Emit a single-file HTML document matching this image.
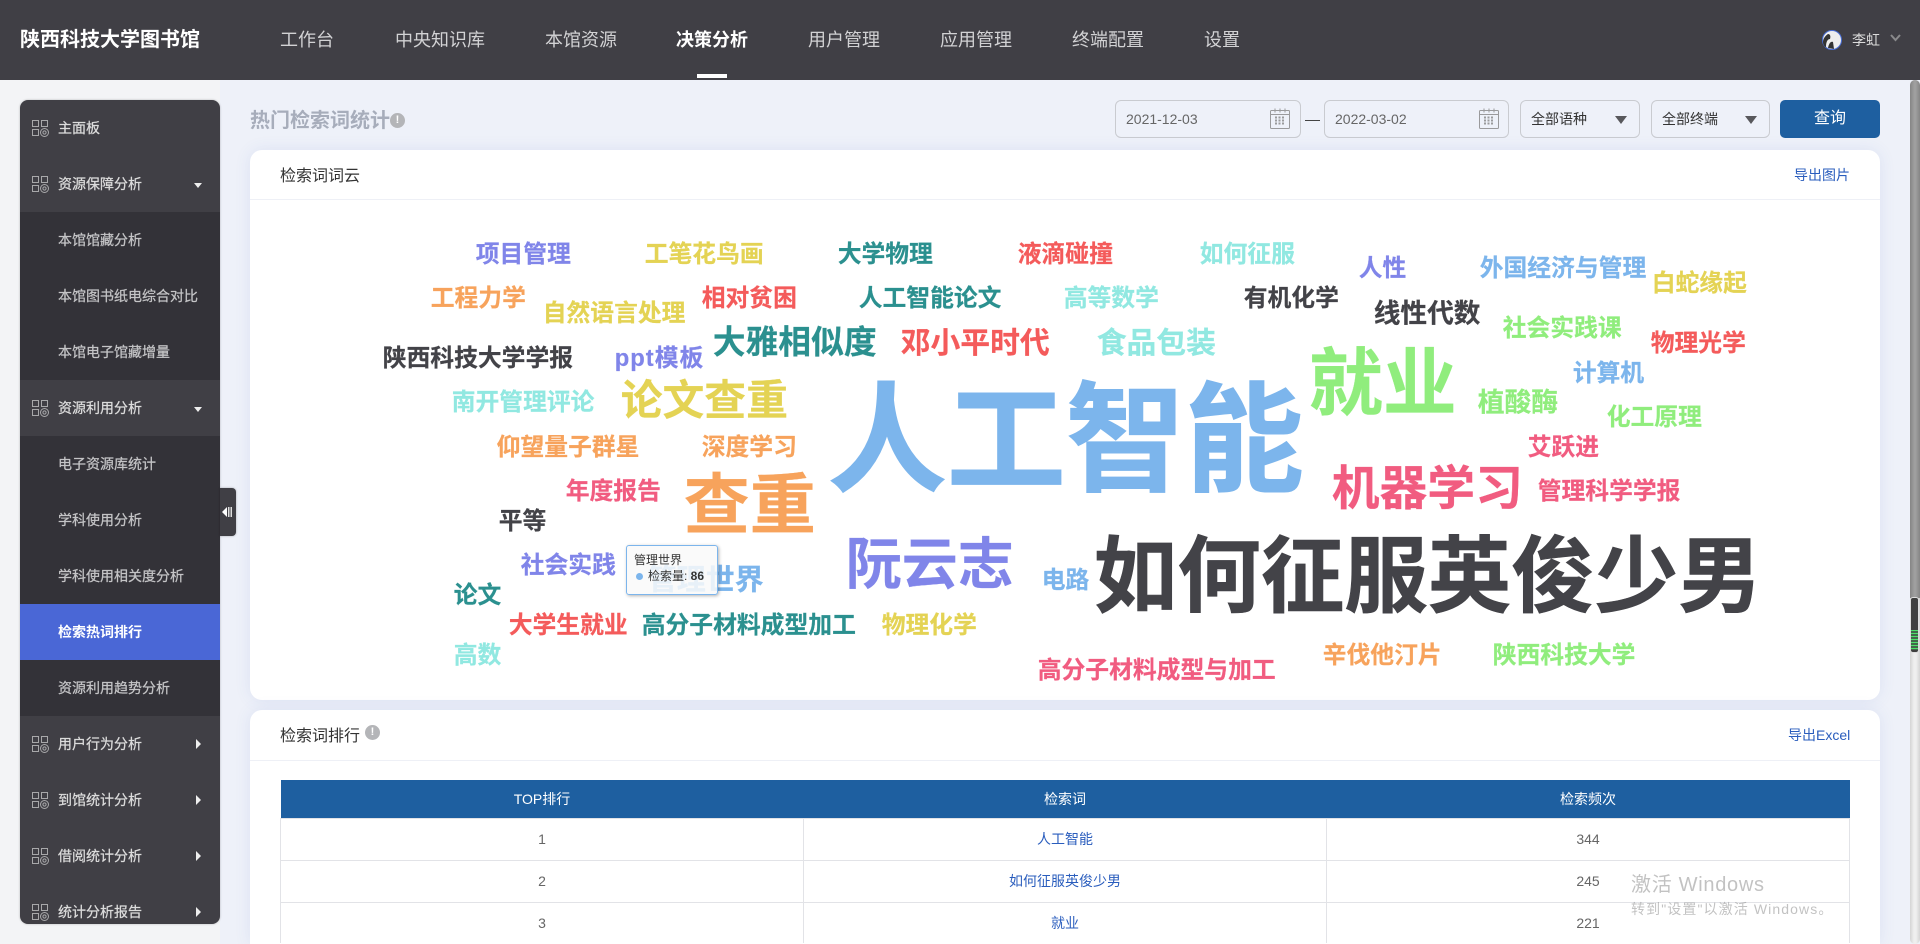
<!DOCTYPE html>
<html lang="zh"><head><meta charset="utf-8"><title>热门检索词统计</title>
<style>
*{box-sizing:border-box}
html,body{margin:0;padding:0;width:1920px;height:944px;overflow:hidden;background:#eef1f9;font-family:"Liberation Sans","Noto Sans CJK SC",sans-serif;color:#333}
#wrap{position:relative;width:1920px;height:944px;overflow:hidden;background:#eef1f9}
.a{position:absolute;white-space:nowrap}
#hd{left:0;top:0;width:1920px;height:80px;background:#403f45}
#logo{left:20px;top:0;line-height:80px;font-size:20px;font-weight:700;color:#fff}
.nv{top:0;line-height:80px;font-size:18px;color:#d2d2d4}
.nv.on{color:#fff;font-weight:700}
#ul{left:697px;top:74px;width:30px;height:4px;background:#fff}
#leftbg{left:0;top:80px;width:220px;height:864px;background:#f3f4f6}
#side{left:20px;top:100px;width:200px;height:824px;background:#403f45;border-radius:8px;overflow:hidden;box-shadow:0 0 2px rgba(0,0,0,.25)}
.it{position:relative;height:56px;line-height:56px;padding-left:38px;font-size:14px;color:#dcdcdc;-webkit-text-stroke:.25px currentColor}
.it svg.ic{position:absolute;left:12px;top:20px}
.sub{background:#333238;color:#c4c4c6}
.act{background:#4a67d6;color:#fff;font-weight:700;-webkit-text-stroke:0}
.dn{position:absolute;left:174px;top:27px;border-left:4px solid transparent;border-right:4px solid transparent;border-top:5px solid #eee}
.rt{position:absolute;left:176px;top:23px;border-top:5px solid transparent;border-bottom:5px solid transparent;border-left:5px solid #eee}
#tog{left:220px;top:488px;width:16px;height:48px;background:#403f45;border-radius:0 4px 4px 0;box-shadow:0 0 2px rgba(0,0,0,.3)}
#ptitle{left:250px;top:108px;font-size:20px;font-weight:700;color:#a7adbb;line-height:26px}
.dot{display:block;border-radius:50%;background:#b4b5b8;color:#fff;text-align:center;font-weight:700}
.ip{top:100px;height:38px;border:1px solid #c9cbd0;border-radius:6px;line-height:36px;font-size:14px;padding-left:10px;color:#666}
.sel{color:#333;padding-left:10px;font-size:14px}
.sel i{position:absolute;right:12px;top:15px;border-left:6px solid transparent;border-right:6px solid transparent;border-top:8px solid #58585c}
#btn{left:1780px;top:100px;width:100px;height:38px;background:#1e5fa0;border-radius:5px;color:#fff;font-size:16px;line-height:38px;text-align:center}
.card{background:#fff;border-radius:12px;box-shadow:0 0 16px rgba(70,100,190,.10)}
.ct{font-size:16px;line-height:24px;color:#333}
.lnk{font-size:14px;color:#2a5dbd;line-height:20px}
.hl{height:1px;background:#eef0f6;left:250px;width:1630px}
.w{font-weight:700;line-height:1;font-size:23.8px;margin-left:-.3px;transform:translateY(calc(-50% + 2px));-webkit-text-stroke:.2px currentColor}
table{position:absolute;left:280px;top:780px;width:1570px;border-collapse:collapse;table-layout:fixed}
th{height:38px;background:#1e5fa0;color:#fff;font-weight:400;font-size:14px;padding:0}
td{height:42px;text-align:center;border:1px solid #e2e3e7;color:#666;font-size:14px;padding:0}
tr.last td{height:41px;border-bottom:0}
td a{color:#2a5dbd;font-size:14px;text-decoration:none}
#tip{left:626px;top:545px;width:92px;height:50px;background:rgba(249,249,249,.86);border:1px solid #7cb5ec;border-radius:3px;box-shadow:1px 1px 3px rgba(0,0,0,.3);font-size:12px;color:#333}
#track{left:1910px;top:80px;width:10px;height:864px;border-radius:5px;background:linear-gradient(90deg,#d4d4d4,#efefef 40%,#efefef 60%,#d4d4d4)}
#thumb{left:1910px;top:80px;width:10px;height:518px;border-radius:5px 5px 0 0;background:linear-gradient(90deg,#858585,#a0a0a0 45%,#a0a0a0 55%,#858585)}
#wid{left:1910px;top:597px;width:9px;height:56px;background:#3f3f3f;border:1px solid #ddd;border-radius:3px}
.wm{color:rgba(120,120,120,.45)}
</style></head><body><div id="wrap">
<div class="a" id="hd"></div>
<div class="a" id="logo">陕西科技大学图书馆</div>
<div class="a nv" style="left:280px">工作台</div>
<div class="a nv" style="left:395px">中央知识库</div>
<div class="a nv" style="left:545px">本馆资源</div>
<div class="a nv on" style="left:676px">决策分析</div>
<div class="a nv" style="left:808px">用户管理</div>
<div class="a nv" style="left:940px">应用管理</div>
<div class="a nv" style="left:1072px">终端配置</div>
<div class="a nv" style="left:1204px">设置</div>
<div class="a" id="ul"></div>
<svg class="a" style="left:1822px;top:30px" width="20" height="20" viewBox="0 0 20 20"><circle cx="10" cy="10" r="9.5" fill="#eee" stroke="#4a6fd8"/><path d="M4 17C4 11 6 9 8 9c1-3 0-5-2-5C3 6 1 9 1 12c0 3 2 5 3 5zM6 18c1-5 3-7 5-6l1 7z" fill="#333"/></svg>
<div class="a" style="left:1852px;top:30px;line-height:20px;font-size:14px;color:#dcdcdc">李虹</div>
<svg class="a" style="left:1890px;top:34px" width="11" height="8" viewBox="0 0 11 8"><path d="M1 1l4.500 5L10 1" fill="none" stroke="#8a8a8c" stroke-width="2"/></svg>

<div class="a" id="leftbg"></div>
<div class="a" id="side">
<div class="it"><svg class="ic" width="17" height="18" viewBox="0 0 17 18" fill="none" stroke="#a8a8aa"><path d="M.5.5h6v6h-6zM9.500.5h6v6h-6zM.5 9.500h6v6h-6z"/><circle cx="12.500" cy="12.500" r="4"/><circle cx="12.500" cy="12.500" r="1.600"/></svg>主面板</div>
<div class="it"><svg class="ic" width="17" height="18" viewBox="0 0 17 18" fill="none" stroke="#a8a8aa"><path d="M.5.5h6v6h-6zM9.500.5h6v6h-6zM.5 9.500h6v6h-6z"/><circle cx="12.500" cy="12.500" r="4"/><circle cx="12.500" cy="12.500" r="1.600"/></svg>资源保障分析<i class="dn"></i></div>
<div class="it sub">本馆馆藏分析</div>
<div class="it sub">本馆图书纸电综合对比</div>
<div class="it sub">本馆电子馆藏增量</div>
<div class="it"><svg class="ic" width="17" height="18" viewBox="0 0 17 18" fill="none" stroke="#a8a8aa"><path d="M.5.5h6v6h-6zM9.500.5h6v6h-6zM.5 9.500h6v6h-6z"/><circle cx="12.500" cy="12.500" r="4"/><circle cx="12.500" cy="12.500" r="1.600"/></svg>资源利用分析<i class="dn"></i></div>
<div class="it sub">电子资源库统计</div>
<div class="it sub">学科使用分析</div>
<div class="it sub">学科使用相关度分析</div>
<div class="it act">检索热词排行</div>
<div class="it sub">资源利用趋势分析</div>
<div class="it"><svg class="ic" width="17" height="18" viewBox="0 0 17 18" fill="none" stroke="#a8a8aa"><path d="M.5.5h6v6h-6zM9.500.5h6v6h-6zM.5 9.500h6v6h-6z"/><circle cx="12.500" cy="12.500" r="4"/><circle cx="12.500" cy="12.500" r="1.600"/></svg>用户行为分析<i class="rt"></i></div>
<div class="it"><svg class="ic" width="17" height="18" viewBox="0 0 17 18" fill="none" stroke="#a8a8aa"><path d="M.5.5h6v6h-6zM9.500.5h6v6h-6zM.5 9.500h6v6h-6z"/><circle cx="12.500" cy="12.500" r="4"/><circle cx="12.500" cy="12.500" r="1.600"/></svg>到馆统计分析<i class="rt"></i></div>
<div class="it"><svg class="ic" width="17" height="18" viewBox="0 0 17 18" fill="none" stroke="#a8a8aa"><path d="M.5.5h6v6h-6zM9.500.5h6v6h-6zM.5 9.500h6v6h-6z"/><circle cx="12.500" cy="12.500" r="4"/><circle cx="12.500" cy="12.500" r="1.600"/></svg>借阅统计分析<i class="rt"></i></div>
<div class="it" style="height:40px;overflow:visible"><svg class="ic" width="17" height="18" viewBox="0 0 17 18" fill="none" stroke="#a8a8aa"><path d="M.5.5h6v6h-6zM9.500.5h6v6h-6zM.5 9.500h6v6h-6z"/><circle cx="12.500" cy="12.500" r="4"/><circle cx="12.500" cy="12.500" r="1.600"/></svg>统计分析报告<i class="rt"></i></div>
</div>
<div class="a" id="tog"><svg style="position:absolute;left:2px;top:19px" width="11" height="10" viewBox="0 0 11 10"><path d="M0 5l5-5v10z" fill="#fff"/><path d="M6 0h1.500v10H6zM8.500 0H10v10H8.500z" fill="#ddd"/></svg></div>

<div class="a" id="ptitle">热门检索词统计</div>
<span class="a dot" style="left:390px;top:113px;width:15px;height:15px;line-height:15px;font-size:11px">!</span>

<div class="a ip" style="left:1115px;width:186px">2021-12-03</div>
<svg class="a" style="left:1270px;top:108px" width="20" height="21" viewBox="0 0 20 21" fill="none" stroke="#9a9a9c"><rect x=".5" y="2.500" width="19" height="18" rx="1"/><path d="M.5 6.500h19M5 .5v4M10 .5v4M15 .5v4"/><path d="M5 9.500h10M5 12.500h10M5 15.500h10" stroke-width="2" stroke-dasharray="2 1.500"/></svg>
<div class="a" style="left:1305px;top:120px;width:15px;height:1px;background:#444"></div>
<div class="a ip" style="left:1324px;width:185px">2022-03-02</div>
<svg class="a" style="left:1479px;top:108px" width="20" height="21" viewBox="0 0 20 21" fill="none" stroke="#9a9a9c"><rect x=".5" y="2.500" width="19" height="18" rx="1"/><path d="M.5 6.500h19M5 .5v4M10 .5v4M15 .5v4"/><path d="M5 9.500h10M5 12.500h10M5 15.500h10" stroke-width="2" stroke-dasharray="2 1.500"/></svg>
<div class="a ip sel" style="left:1520px;width:120px">全部语种<i></i></div>
<div class="a ip sel" style="left:1651px;width:119px">全部终端<i></i></div>
<div class="a" id="btn">查询</div>

<div class="a card" style="left:250px;top:150px;width:1630px;height:550px"></div>
<div class="a ct" style="left:280px;top:165px">检索词词云</div>
<div class="a lnk" style="left:1794px;top:165px">导出图片</div>
<div class="a hl" style="top:199px"></div>

<div class="a w" style="left:476px;top:253px;color:#8085e9">项目管理</div>
<div class="a w" style="left:645px;top:253px;color:#e4d354">工笔花鸟画</div>
<div class="a w" style="left:838px;top:253px;color:#2b908f">大学物理</div>
<div class="a w" style="left:1018px;top:253px;color:#f45b5b">液滴碰撞</div>
<div class="a w" style="left:1200px;top:253px;color:#91e8e1">如何征服</div>
<div class="a w" style="left:1359px;top:267px;color:#8085e9">人性</div>
<div class="a w" style="left:1480px;top:267px;color:#7cb5ec">外国经济与管理</div>
<div class="a w" style="left:1652px;top:282px;color:#e4d354">白蛇缘起</div>
<div class="a w" style="left:431px;top:297px;color:#f7a35c">工程力学</div>
<div class="a w" style="left:543px;top:312px;color:#e4d354">自然语言处理</div>
<div class="a w" style="left:702px;top:297px;color:#f45b5b">相对贫困</div>
<div class="a w" style="left:859px;top:297px;color:#2b908f">人工智能论文</div>
<div class="a w" style="left:1064px;top:297px;color:#91e8e1">高等数学</div>
<div class="a w" style="left:1244px;top:297px;color:#434348">有机化学</div>
<div class="a w" style="left:1374px;top:312px;font-size:26.700px;color:#434348">线性代数</div>
<div class="a w" style="left:1503px;top:327px;color:#90ed7d">社会实践课</div>
<div class="a w" style="left:1651px;top:342px;color:#f45b5b">物理光学</div>
<div class="a w" style="left:713px;top:341px;font-size:32.800px;color:#2b908f">大雅相似度</div>
<div class="a w" style="left:901px;top:342px;font-size:29.800px;color:#f45b5b">邓小平时代</div>
<div class="a w" style="left:1097px;top:342px;font-size:29.800px;color:#91e8e1">食品包装</div>
<div class="a w" style="left:383px;top:357px;color:#434348">陕西科技大学学报</div>
<div class="a w" style="left:615px;top:357px;letter-spacing:1px;color:#8085e9">ppt模板</div>
<div class="a w" style="left:1573px;top:372px;color:#7cb5ec">计算机</div>
<div class="a w" style="left:1309px;top:382px;font-size:74px;color:#90ed7d">就业</div>
<div class="a w" style="left:621px;top:399px;font-size:41.800px;color:#e4d354">论文查重</div>
<div class="a w" style="left:452px;top:401px;color:#91e8e1">南开管理评论</div>
<div class="a w" style="left:1478px;top:401px;font-size:26.800px;color:#90ed7d">植酸酶</div>
<div class="a w" style="left:828px;top:439px;font-size:119px;-webkit-text-stroke:1px currentColor;color:#7cb5ec">人工智能</div>
<div class="a w" style="left:1607px;top:416px;color:#90ed7d">化工原理</div>
<div class="a w" style="left:497px;top:446px;color:#f7a35c">仰望量子群星</div>
<div class="a w" style="left:702px;top:446px;color:#f7a35c">深度学习</div>
<div class="a w" style="left:1528px;top:446px;color:#f15c80">艾跃进</div>
<div class="a w" style="left:1332px;top:488px;font-size:47.800px;color:#f15c80">机器学习</div>
<div class="a w" style="left:566px;top:490px;color:#f15c80">年度报告</div>
<div class="a w" style="left:1538px;top:490px;color:#f15c80">管理科学学报</div>
<div class="a w" style="left:684px;top:503px;font-size:66px;color:#f7a35c">查重</div>
<div class="a w" style="left:499px;top:520px;color:#434348">平等</div>
<div class="a w" style="left:846px;top:563px;font-size:56px;color:#8085e9">阮云志</div>
<div class="a w" style="left:1094px;top:575px;font-size:83.500px;-webkit-text-stroke:.6px currentColor;color:#434348">如何征服英俊少男</div>
<div class="a w" style="left:521px;top:564px;color:#8085e9">社会实践</div>
<div class="a w" style="left:648px;top:579px;font-size:29px;color:#7cb5ec">管理世界</div>
<div class="a w" style="left:1042px;top:579px;color:#7cb5ec">电路</div>
<div class="a w" style="left:454px;top:594px;color:#2b908f">论文</div>
<div class="a w" style="left:509px;top:624px;color:#f45b5b">大学生就业</div>
<div class="a w" style="left:642px;top:624px;color:#2b908f">高分子材料成型加工</div>
<div class="a w" style="left:882px;top:624px;color:#e4d354">物理化学</div>
<div class="a w" style="left:454px;top:654px;color:#91e8e1">高数</div>
<div class="a w" style="left:1038px;top:669px;color:#f15c80">高分子材料成型与加工</div>
<div class="a w" style="left:1323px;top:654px;color:#f7a35c">辛伐他汀片</div>
<div class="a w" style="left:1493px;top:654px;color:#90ed7d">陕西科技大学</div>

<div class="a" id="tip">
<div class="a" style="left:7px;top:6px;line-height:16px">管理世界</div>
<div class="a" style="left:9px;top:27px;width:7px;height:7px;border-radius:50%;background:#7cb5ec"></div>
<div class="a" style="left:21px;top:22px;line-height:16px">检索量: <b>86</b></div>
</div>

<div class="a card" style="left:250px;top:710px;width:1630px;height:234px;border-radius:12px 12px 0 0"></div>
<div class="a ct" style="left:280px;top:725px">检索词排行</div>
<span class="a dot" style="left:365px;top:725px;width:15px;height:15px;line-height:15px;font-size:11px">!</span>
<div class="a lnk" style="left:1788px;top:725px">导出Excel</div>
<div class="a hl" style="top:760px"></div>
<table>
<tr><th>TOP排行</th><th>检索词</th><th>检索频次</th></tr>
<tr><td>1</td><td><a>人工智能</a></td><td>344</td></tr>
<tr><td>2</td><td><a>如何征服英俊少男</a></td><td>245</td></tr>
<tr class="last"><td>3</td><td><a>就业</a></td><td>221</td></tr>
</table>

<div class="a" id="track"></div>
<div class="a" id="thumb"></div>
<div class="a" id="wid"><svg style="position:absolute;left:0;top:32px" width="7" height="22"><path d="M0 .5h7M0 3.500h7M0 6.500h7M0 9.500h7M0 12.500h7M0 15.500h7M0 18.500h7" stroke="#4ee06a" stroke-width="1.500"/></svg></div>

<div class="a wm" style="left:1631px;top:873px;font-size:20px;line-height:24px;letter-spacing:.7px">激活 Windows</div>
<div class="a wm" style="left:1631px;top:899px;font-size:14px;line-height:20px;letter-spacing:1.1px">转到"设置"以激活 Windows。</div>
</div></body></html>
